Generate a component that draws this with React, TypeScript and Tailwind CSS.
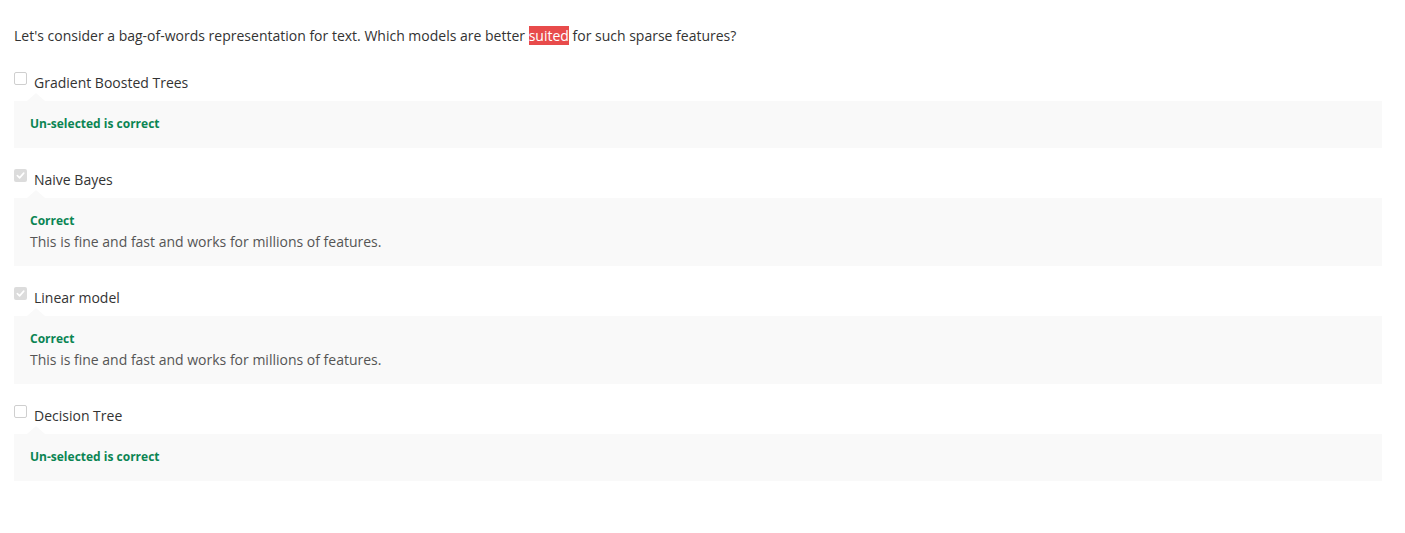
import React from "react";
import clsx from "clsx";

type Option = {
  label: string;
  checked: boolean;
  verdict: string;
  explanation?: string;
};

const options: Option[] = [
  { label: "Gradient Boosted Trees", checked: false, verdict: "Un-selected is correct" },
  {
    label: "Naive Bayes",
    checked: true,
    verdict: "Correct",
    explanation: "This is fine and fast and works for millions of features.",
  },
  {
    label: "Linear model",
    checked: true,
    verdict: "Correct",
    explanation: "This is fine and fast and works for millions of features.",
  },
  { label: "Decision Tree", checked: false, verdict: "Un-selected is correct" },
];

function Checkbox({ checked }: { checked: boolean }) {
  if (checked) {
    return (
      <span className="w-[13px] h-[13px] rounded-[2px] bg-[#dcdcdc] flex items-center justify-center shrink-0">
        <svg width="9" height="9" viewBox="0 0 10 10" fill="none">
          <path d="M1.5 5.2 L4 7.6 L8.6 2.4" stroke="#fff" strokeWidth="1.8" strokeLinecap="round" strokeLinejoin="round" />
        </svg>
      </span>
    );
  }
  return <span className="w-[13px] h-[13px] rounded-[2px] border border-[#cfcfcf] bg-white shrink-0" />;
}

export default function App() {
  return (
    <div
      className="bg-white min-h-[533px] pl-[14px] pt-[25px] text-[#333] text-[14px] leading-[21px]"
      style={{ fontFamily: '"Open Sans", "Liberation Sans", sans-serif' }}
    >
      {/* Câu hỏi */}
      <p>
        Let's consider a bag-of-words representation for text. Which models are better{" "}
        <span className="bg-[#e84b4b] text-white">suited</span> for such sparse features?
      </p>

      <div className="w-[1368px] mt-[26px]">
        {options.map((opt, i) => (
          <div key={opt.label} className={clsx(i > 0 && "mt-[21px]")}>
            {/* Lựa chọn */}
            <div className="flex items-start gap-[7px] h-[21px]">
              <Checkbox checked={opt.checked} />
              <span>{opt.label}</span>
            </div>

            {/* Phản hồi */}
            <div
              className={clsx(
                "relative mt-[8px] bg-[#f9f9f9] px-[16px] pt-[14px]",
                opt.explanation ? "pb-[14px]" : "pb-[15px]"
              )}
            >
              <span className="absolute -top-[8px] left-[13px] w-0 h-0 border-l-[9px] border-r-[9px] border-b-[8px] border-l-transparent border-r-transparent border-b-[#f9f9f9]" />
              <div className="text-[12px] leading-[18px] font-bold text-[#0b8553]">{opt.verdict}</div>
              {opt.explanation && (
                <div className="mt-[1px] text-[#555]">{opt.explanation}</div>
              )}
            </div>
          </div>
        ))}
      </div>
    </div>
  );
}
